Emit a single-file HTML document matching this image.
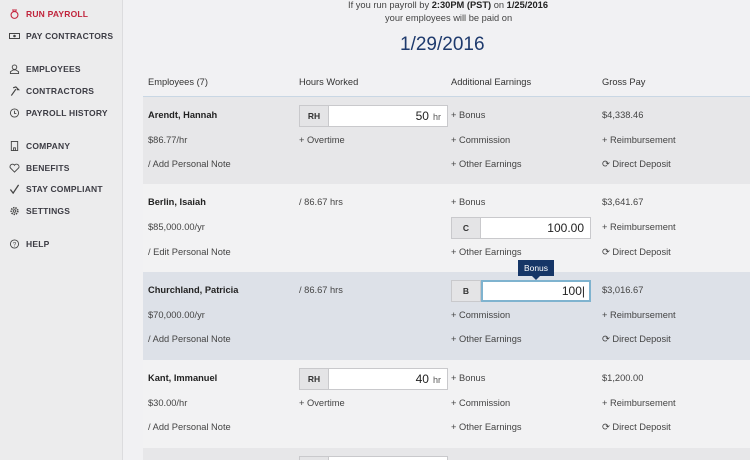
<!DOCTYPE html>
<html style="width:750px;height:460px;overflow:hidden"><head><meta charset="utf-8"><style>
*{margin:0;padding:0;box-sizing:border-box}
body{width:750px;height:460px;overflow:hidden;background:#f1f1f3;font-family:"Liberation Sans",sans-serif;position:relative;color:#333}
#side{position:absolute;left:0;top:0;width:123px;height:460px;background:#ececed;border-right:1px solid #dcdcde}
.ni{position:absolute;left:26px;font-size:8.5px;font-weight:bold;color:#3c3c44;letter-spacing:.2px;line-height:10px}
.ic{position:absolute;left:9px;width:11px;height:10px}
.t{position:absolute;font-size:9.3px;line-height:11px;color:#444;white-space:nowrap}
.b{font-weight:bold;color:#222}
.row{position:absolute;left:143px;width:607px;height:88px}
.inp{position:absolute;height:22px;border:1px solid #c9c9cc;background:#fff}
.lab{position:absolute;left:0;top:0;width:29px;height:20px;background:#e4e4e6;border-right:1px solid #c9c9cc;font-size:8.5px;font-weight:bold;text-align:center;line-height:20px;color:#333}
.val{position:absolute;right:6px;top:0;line-height:20px;font-size:12px;color:#222}
.val small{font-size:9px;color:#555;margin-left:4px}
</style></head><body>
<div id="side">
<svg class="ic" style="top:9px" viewBox="0 0 11 11"><circle cx="5.5" cy="6.5" r="3.8" fill="none" stroke="#c5243e" stroke-width="1.2"/><path d="M3.5 1h4l-1 2h-2z" fill="none" stroke="#c5243e" stroke-width="1"/></svg>
<div class="ni" style="top:9px;color:#c0243c">RUN PAYROLL</div>
<svg class="ic" style="top:31px" viewBox="0 0 11 10"><rect x="0.5" y="2.5" width="10" height="5" fill="none" stroke="#444"/><circle cx="5.5" cy="5" r="1.3" fill="#444"/></svg>
<div class="ni" style="top:31px">PAY CONTRACTORS</div>
<svg class="ic" style="top:64px" viewBox="0 0 11 11"><circle cx="5.5" cy="3.5" r="2.5" fill="none" stroke="#444"/><path d="M1 10.5v-2l3-2h3l3 2v2z" fill="none" stroke="#444"/></svg>
<div class="ni" style="top:64px">EMPLOYEES</div>
<svg class="ic" style="top:86px" viewBox="0 0 11 11"><path d="M2 10.5l5-7M4 2l3-1 3 3-2 0" fill="none" stroke="#444" stroke-width="1.3"/></svg>
<div class="ni" style="top:86px">CONTRACTORS</div>
<svg class="ic" style="top:108px" viewBox="0 0 11 11"><circle cx="5.5" cy="5.5" r="4.5" fill="none" stroke="#444"/><path d="M5.5 3v3h2" fill="none" stroke="#444"/></svg>
<div class="ni" style="top:108px">PAYROLL HISTORY</div>
<svg class="ic" style="top:141px" viewBox="0 0 11 11"><rect x="2" y="0.5" width="7" height="10" fill="none" stroke="#444"/><path d="M4.5 10.5v-3h2v3" fill="none" stroke="#444"/></svg>
<div class="ni" style="top:141px">COMPANY</div>
<svg class="ic" style="top:163px" viewBox="0 0 11 11"><path d="M5.5 10L1 5.5a2.5 2.5 0 014.5-3 2.5 2.5 0 014.5 3z" fill="none" stroke="#444"/></svg>
<div class="ni" style="top:163px">BENEFITS</div>
<svg class="ic" style="top:184px" viewBox="0 0 11 11"><path d="M1 6l3 4 6-9" fill="none" stroke="#444" stroke-width="1.4"/></svg>
<div class="ni" style="top:184px">STAY COMPLIANT</div>
<svg class="ic" style="top:206px" viewBox="0 0 11 11"><circle cx="5.5" cy="5.5" r="3.6" fill="none" stroke="#444" stroke-width="1.8" stroke-dasharray="1.5 1"/><circle cx="5.5" cy="5.5" r="1.4" fill="none" stroke="#444"/></svg>
<div class="ni" style="top:206px">SETTINGS</div>
<svg class="ic" style="top:239px" viewBox="0 0 11 11"><circle cx="5.5" cy="5.5" r="4.5" fill="none" stroke="#444"/><text x="3.6" y="8.3" font-size="7" fill="#444" font-family="Liberation Sans">?</text></svg>
<div class="ni" style="top:239px">HELP</div>
</div>

<div class="t" style="left:348px;top:0px">If you run payroll by <b class="b">2:30PM (PST)</b> on <b class="b">1/25/2016</b></div>
<div class="t" style="left:385px;top:13px">your employees will be paid on</div>
<div style="position:absolute;left:400px;top:34px;font-size:19px;color:#1e3a6d">1/29/2016</div>

<div class="t" style="left:148px;top:77px;color:#333">Employees (7)</div>
<div class="t" style="left:299px;top:77px;color:#333">Hours Worked</div>
<div class="t" style="left:451px;top:77px;color:#333">Additional Earnings</div>
<div class="t" style="left:602px;top:77px;color:#333">Gross Pay</div>
<div style="position:absolute;left:143px;top:96px;width:607px;height:1px;background:#c9d7e4"></div>

<div class="row" style="top:97px;height:87px;background:#e7e7e9"></div>
<div class="row" style="top:184px;background:#f2f2f3"></div>
<div class="row" style="top:272px;background:#dde1e8"></div>
<div class="row" style="top:360px;background:#f2f2f3"></div>
<div class="row" style="top:448px;height:12px;background:#e7e7e9"></div>

<div class="t b" style="left:148px;top:110px">Arendt, Hannah</div>
<div class="t" style="left:148px;top:135px">$86.77/hr</div>
<div class="t" style="left:148px;top:159px">/ Add Personal Note</div>
<div class="inp" style="left:299px;top:105px;width:149px"><div class="lab">RH</div><div class="val">50<small>hr</small></div></div>
<div class="t" style="left:299px;top:135px">+ Overtime</div>
<div class="t" style="left:451px;top:110px">+ Bonus</div>
<div class="t" style="left:451px;top:135px">+ Commission</div>
<div class="t" style="left:451px;top:159px">+ Other Earnings</div>
<div class="t" style="left:602px;top:110px">$4,338.46</div>
<div class="t" style="left:602px;top:135px">+ Reimbursement</div>
<div class="t" style="left:602px;top:159px">⟳ Direct Deposit</div>

<div class="t b" style="left:148px;top:197px">Berlin, Isaiah</div>
<div class="t" style="left:148px;top:222px">$85,000.00/yr</div>
<div class="t" style="left:148px;top:247px">/ Edit Personal Note</div>
<div class="t" style="left:299px;top:197px">/ 86.67 hrs</div>
<div class="t" style="left:451px;top:197px">+ Bonus</div>
<div class="inp" style="left:451px;top:217px;width:140px"><div class="lab">C</div><div class="val">100.00</div></div>
<div class="t" style="left:451px;top:247px">+ Other Earnings</div>
<div class="t" style="left:602px;top:197px">$3,641.67</div>
<div class="t" style="left:602px;top:222px">+ Reimbursement</div>
<div class="t" style="left:602px;top:247px">⟳ Direct Deposit</div>

<div class="t b" style="left:148px;top:285px">Churchland, Patricia</div>
<div class="t" style="left:148px;top:310px">$70,000.00/yr</div>
<div class="t" style="left:148px;top:334px">/ Add Personal Note</div>
<div class="t" style="left:299px;top:285px">/ 86.67 hrs</div>
<div class="inp" style="left:451px;top:280px;width:140px;background:#e4e4e6"><div class="lab">B</div><div style="position:absolute;left:29px;top:-1px;right:-1px;bottom:-1px;border:2px solid #7fb3cf;background:#fff"><div class="val" style="top:-1px;right:4px">100|</div></div></div>
<div style="position:absolute;left:518px;top:260px;width:36px;height:16px;background:#163667;color:#fff;font-size:8.5px;text-align:center;line-height:16px">Bonus</div>
<div style="position:absolute;left:532px;top:276px;width:0;height:0;border-left:4px solid transparent;border-right:4px solid transparent;border-top:4px solid #163667"></div>
<div class="t" style="left:451px;top:310px">+ Commission</div>
<div class="t" style="left:451px;top:334px">+ Other Earnings</div>
<div class="t" style="left:602px;top:285px">$3,016.67</div>
<div class="t" style="left:602px;top:310px">+ Reimbursement</div>
<div class="t" style="left:602px;top:334px">⟳ Direct Deposit</div>

<div class="t b" style="left:148px;top:373px">Kant, Immanuel</div>
<div class="t" style="left:148px;top:398px">$30.00/hr</div>
<div class="t" style="left:148px;top:422px">/ Add Personal Note</div>
<div class="inp" style="left:299px;top:368px;width:149px"><div class="lab">RH</div><div class="val">40<small>hr</small></div></div>
<div class="t" style="left:299px;top:398px">+ Overtime</div>
<div class="t" style="left:451px;top:373px">+ Bonus</div>
<div class="t" style="left:451px;top:398px">+ Commission</div>
<div class="t" style="left:451px;top:422px">+ Other Earnings</div>
<div class="t" style="left:602px;top:373px">$1,200.00</div>
<div class="t" style="left:602px;top:398px">+ Reimbursement</div>
<div class="t" style="left:602px;top:422px">⟳ Direct Deposit</div>

<div class="inp" style="left:299px;top:456px;width:149px;height:4px;border-bottom:none"><div class="lab" style="height:4px"></div></div>
</body></html>
